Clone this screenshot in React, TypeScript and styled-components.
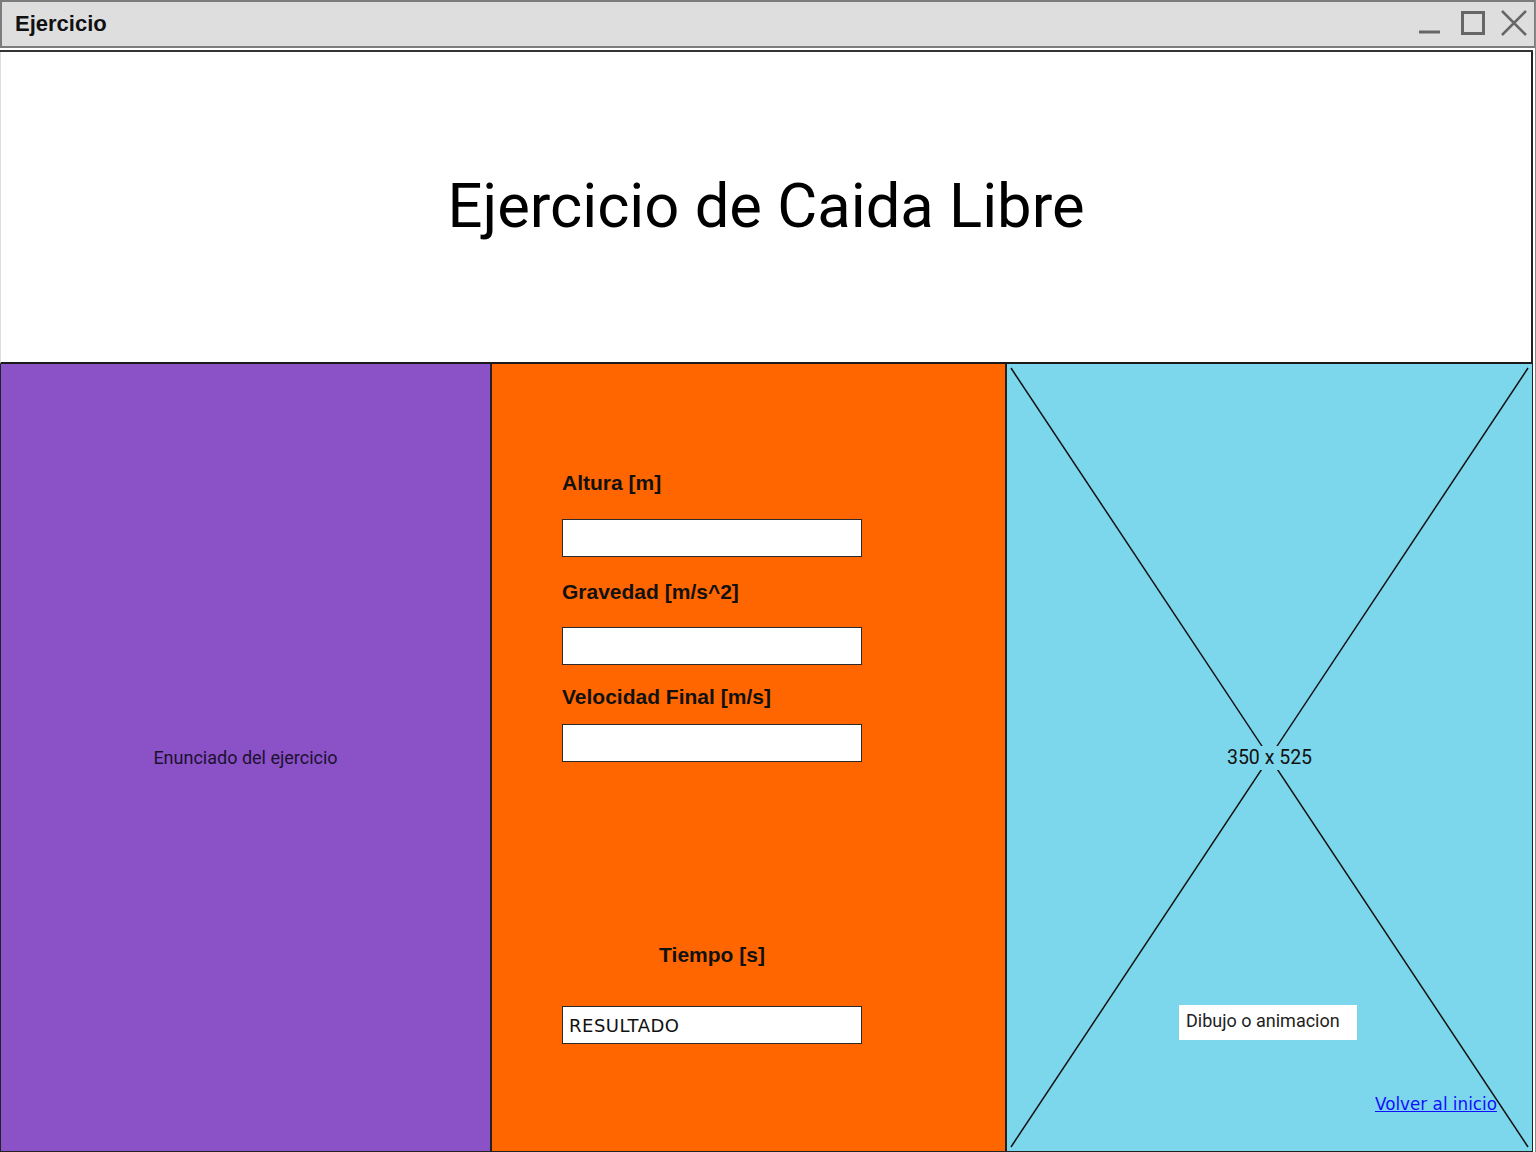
import React from "react";
import styled, { createGlobalStyle } from "styled-components";

const Global = createGlobalStyle`
  html, body { margin: 0; padding: 0; background: #fff; }
  body { font-family: Roboto, "Liberation Sans", sans-serif; }
`;

const Window = styled.div`
  width: 1536px;
  height: 1152px;
  display: flex;
  flex-direction: column;
  box-sizing: border-box;
  border-right: 1px solid #8a8a8a;
  overflow: hidden;
  background: #fff;
`;

const TitleBar = styled.div`
  height: 48px;
  box-sizing: border-box;
  background: #dedede;
  border: 2px solid #7c7c7c;
  border-right-width: 1px;
  display: flex;
  align-items: center;
  justify-content: space-between;
  padding: 0 6px 0 13px;
  flex-shrink: 0;
`;

const TitleText = styled.span`
  font-family: "Liberation Sans", Arial, sans-serif;
  font-weight: bold;
  font-size: 22px;
  color: #111;
`;

const Controls = styled.div`
  display: flex;
  align-items: center;
  gap: 14px;
  margin-top: -2px;
`;

const Separator = styled.div`
  height: 4px;
  flex-shrink: 0;
  border-top: 1px solid #fff;
  border-bottom: 2px solid #333;
  box-sizing: border-box;
  margin-right: 2px;
`;

const Content = styled.div`
  flex: 1;
  display: flex;
  flex-direction: column;
  width: 1533px;
`;

const Header = styled.div`
  height: 312px;
  box-sizing: border-box;
  border-left: 1px solid #ddd;
  border-right: 2px solid #222;
  border-bottom: 2px solid #1a1a1a;
  display: flex;
  align-items: center;
  justify-content: center;
  flex-shrink: 0;
`;

const HeaderTitle = styled.h1`
  margin: 0;
  font-family: Roboto, sans-serif;
  font-weight: 400;
  font-size: 61.5px;
  color: #000;
  padding-bottom: 2px;
`;

const Panels = styled.div`
  flex: 1;
  display: flex;
`;

const Panel = styled.div<{ $bg: string; $w?: number }>`
  background: ${(p) => p.$bg};
  ${(p) => (p.$w ? `width: ${p.$w}px; flex-shrink: 0;` : `flex: 1;`)}
  box-sizing: border-box;
  border: 1.5px solid #222;
  border-top: none;
  position: relative;
`;

const PurplePanel = styled(Panel)`
  display: flex;
  align-items: center;
  justify-content: center;
`;

const Statement = styled.span`
  font-size: 18px;
  color: #1b1030;
  margin-top: 0px;
`;

const Form = styled.div`
  display: flex;
  flex-direction: column;
  padding: 107px 0 0 70px;
  width: 300px;
`;

const Label = styled.label<{ $mt?: number; $center?: boolean }>`
  font-family: "Liberation Sans", Arial, sans-serif;
  font-weight: bold;
  font-size: 21px;
  color: #111;
  height: 24px;
  line-height: 24px;
  margin-top: ${(p) => p.$mt ?? 0}px;
  ${(p) => (p.$center ? "text-align: center;" : "")}
`;

const Input = styled.div<{ $mt: number }>`
  width: 300px;
  height: 38px;
  box-sizing: border-box;
  background: #fff;
  border: 1.5px solid #2a2a2a;
  margin-top: ${(p) => p.$mt}px;
  font-family: "Comic Sans MS", "DejaVu Sans", sans-serif;
  font-size: 18px;
  display: flex;
  align-items: center;
  padding-left: 6px;
  color: #111;
  letter-spacing: 0.5px;
`;

const Cross = styled.svg`
  position: absolute;
  inset: 0;
  width: 100%;
  height: 100%;
`;

const Dims = styled.span`
  position: absolute;
  left: 50%;
  top: 382px;
  transform: translate(-50%, 0);
  background: #7dd7ec;
  padding: 0 3px;
  font-size: 19.5px;
  color: #111;
  line-height: 24px;
`;

const Caption = styled.span`
  position: absolute;
  left: 172px;
  top: 641px;
  width: 178px;
  height: 35px;
  background: #fff;
  box-sizing: border-box;
  padding-left: 7px;
  font-size: 18px;
  color: #222;
  line-height: 32px;
`;

const BackLink = styled.a`
  position: absolute;
  left: 368px;
  top: 730px;
  font-family: "Comic Sans MS", "DejaVu Sans", sans-serif;
  font-size: 16.8px;
  color: #1010ff;
  text-decoration: underline;
`;

export default function App() {
  return (
    <>
      <Global />
      <Window>
        <TitleBar>
          <TitleText>Ejercicio</TitleText>
          <Controls>
            <svg width="28" height="28" viewBox="0 0 28 28">
              <line x1="1" y1="23" x2="22" y2="23" stroke="#666" strokeWidth="3" />
            </svg>
            <svg width="26" height="28" viewBox="0 0 26 28">
              <rect x="2.5" y="3.5" width="21" height="21" fill="none" stroke="#666" strokeWidth="3" />
            </svg>
            <svg width="28" height="28" viewBox="0 0 28 28">
              <path d="M2 2 L26 26 M26 2 L2 26" stroke="#666" strokeWidth="2.5" />
            </svg>
          </Controls>
        </TitleBar>
        <Separator />
        <Content>
          <Header>
            <HeaderTitle>Ejercicio de Caida Libre</HeaderTitle>
          </Header>
          <Panels>
            <PurplePanel $bg="#8b52c8" $w={491}>
              <Statement>Enunciado del ejercicio</Statement>
            </PurplePanel>
            <Panel $bg="#ff6600" $w={515}>
              <Form>
                <Label>Altura [m]</Label>
                <Input $mt={24} />
                <Label $mt={23}>Gravedad [m/s^2]</Label>
                <Input $mt={23} />
                <Label $mt={20}>Velocidad Final [m/s]</Label>
                <Input $mt={15} />
                <Label $mt={181} $center>Tiempo [s]</Label>
                <Input $mt={39}>RESULTADO</Input>
              </Form>
            </Panel>
            <Panel $bg="#7dd7ec">
              <Cross viewBox="0 0 526 787" preserveAspectRatio="none">
                <line x1="4" y1="4" x2="522" y2="783" stroke="#111" strokeWidth="1.5" />
                <line x1="522" y1="4" x2="4" y2="783" stroke="#111" strokeWidth="1.5" />
              </Cross>
              <Dims>350 x 525</Dims>
              <Caption>Dibujo o animacion</Caption>
              <BackLink href="#">Volver al inicio</BackLink>
            </Panel>
          </Panels>
        </Content>
      </Window>
    </>
  );
}
